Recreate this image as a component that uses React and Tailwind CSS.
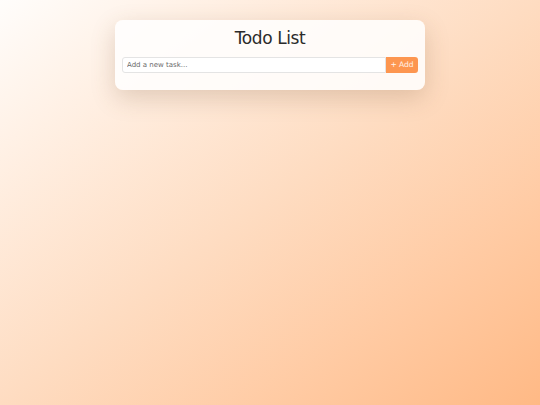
export default function App() {
  return (
    <div className="min-h-screen bg-linear-to-br from-[#fffdfb] via-[#fedcc1] to-[#ffb985] pt-5 font-['DejaVu_Sans',sans-serif]">
      <div className="mx-auto w-[310px] rounded-lg bg-white/85 px-[7px] pt-[6px] pb-[17px] shadow-[0_8px_24px_rgba(120,80,50,0.22)]">
        <h1 className="text-center text-[17px] leading-[24px] tracking-tight text-[#2b2b2b]">Todo List</h1>
        <div className="mt-[7px] flex h-4">
          <input
            type="text"
            placeholder="Add a new task..."
            className="h-4 min-w-0 flex-1 rounded-l-[3px] border border-[#e4e4e4] bg-white px-[4px] text-[7px] text-gray-800 placeholder:text-[#6a6a6a] focus:outline-none"
          />
          <button className="h-4 w-8 rounded-r-[3px] bg-[#fd9650] text-[7.5px] text-white/90">
            + Add
          </button>
        </div>
      </div>
    </div>
  );
}
